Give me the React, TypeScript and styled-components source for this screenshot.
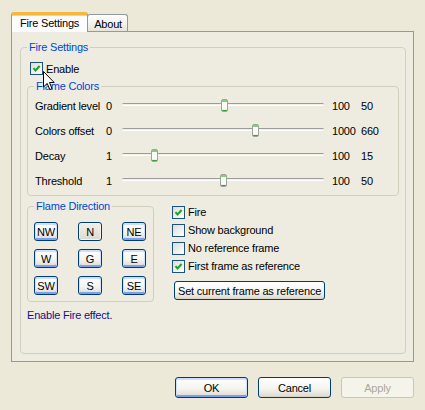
import React from "react";
import styled, { createGlobalStyle, css } from "styled-components";

const GlobalStyle = createGlobalStyle`
  html, body {
    margin: 0;
    padding: 0;
    background: #ece9d8;
  }
  body {
    font-family: "Liberation Sans", Arial, sans-serif;
    font-size: 11px;
    letter-spacing: -0.2px;
    color: #000;
  }
  * {
    box-sizing: border-box;
  }
`;

type SliderDef = { label: string; min: number; max: number; value: number };

const sliders: SliderDef[] = [
  { label: "Gradient level", min: 0, max: 100, value: 50 },
  { label: "Colors offset", min: 0, max: 1000, value: 660 },
  { label: "Decay", min: 1, max: 100, value: 15 },
  { label: "Threshold", min: 1, max: 100, value: 50 },
];

const directions = ["NW", "N", "NE", "W", "G", "E", "SW", "S", "SE"];

const options = [
  { label: "Fire", checked: true },
  { label: "Show background", checked: false },
  { label: "No reference frame", checked: false },
  { label: "First frame as reference", checked: true },
];

const TRACK_W = 202;
const THUMB_W = 7;

const CheckBox: React.FC<{ checked?: boolean }> = ({ checked }) => (
  <Box>
    {checked && (
      <svg width="11" height="11" viewBox="0 0 11 11">
        <path d="M2.5 5.2 L4.5 7.4 L8.6 3" fill="none" stroke="#21a121" strokeWidth="2" />
      </svg>
    )}
  </Box>
);

const Slider: React.FC<{ def: SliderDef }> = ({ def }) => {
  const pct = (def.value - def.min) / (def.max - def.min);
  return (
    <SliderRow>
      <span>{def.label}</span>
      <span>{def.min}</span>
      <Track>
        <Channel />
        <Thumb style={{ left: 1 + pct * (TRACK_W - THUMB_W) }} />
      </Track>
      <MaxValue>{def.max}</MaxValue>
      <span>{def.value}</span>
    </SliderRow>
  );
};

export default function App() {
  return (
    <Dialog>
      <GlobalStyle />
      <TabStrip>
        <Tab $active>Fire Settings</Tab>
        <Tab>About</Tab>
      </TabStrip>
      <Panel>
        <GroupBox $outer>
          <GroupLabel>Fire Settings</GroupLabel>
          <EnableRow>
            <CheckBox checked />
            <span>Enable</span>
          </EnableRow>
          <GroupBox $mt={5}>
            <GroupLabel>Flame Colors</GroupLabel>
            <SliderList>
              {sliders.map((s) => (
                <Slider key={s.label} def={s} />
              ))}
            </SliderList>
          </GroupBox>
          <LowerSection>
            <DirectionBox>
              <GroupLabel>Flame Direction</GroupLabel>
              <DirGrid>
                {directions.map((d) => (
                  <DirButton key={d} $plain={d === "N"}>
                    {d}
                  </DirButton>
                ))}
              </DirGrid>
            </DirectionBox>
            <OptionColumn>
              {options.map((o) => (
                <CheckRow key={o.label}>
                  <CheckBox checked={o.checked} />
                  <span>{o.label}</span>
                </CheckRow>
              ))}
              <RefButton>Set current frame as reference</RefButton>
            </OptionColumn>
          </LowerSection>
          <StatusText>Enable Fire effect.</StatusText>
        </GroupBox>
      </Panel>
      <Footer>
        <PushButton $default>OK</PushButton>
        <PushButton>Cancel</PushButton>
        <PushButton $disabled>Apply</PushButton>
      </Footer>
      <Cursor width="12" height="20" viewBox="0 0 12 20">
        <path d="M0.5 0.5 L0.5 16 L4.2 12.4 L6.8 18.6 L9 17.6 L6.5 11.5 L11.2 11.5 Z" fill="#fff" stroke="#000" strokeWidth="1" />
      </Cursor>
    </Dialog>
  );
}

//css-style
const Dialog = styled.div`
  position: relative;
  width: 425px;
  height: 410px;
  background: #ece9d8;
  padding: 12px 11px 0 11px;
  display: flex;
  flex-direction: column;
`;

const TabStrip = styled.div`
  display: flex;
  align-items: flex-end;
  height: 20px;
  margin-bottom: -1px;
  position: relative;
  z-index: 1;
`;

const Tab = styled.div<{ $active?: boolean }>`
  display: flex;
  align-items: center;
  border: 1px solid #919b9c;
  border-bottom: none;
  border-radius: 3px 3px 0 0;
  ${(p) =>
    p.$active
      ? css`
          height: 20px;
          padding: 0 8px 2px 8px;
          background: #fcfcfe;
          border-top: 3px solid #f4b83a;
          box-shadow: inset 0 1px 0 #ffd36a;
        `
      : css`
          height: 17px;
          margin-bottom: 1px;
          padding: 1px 5px 0 6px;
          margin-left: -1px;
          background: linear-gradient(#ffffff, #f1f0ea 60%, #e6e4d8);
        `}
`;

const Panel = styled.div`
  height: 331px;
  border: 1px solid #919b9c;
  background: #eeece1;
  padding: 9px 6px 0 8px;
`;

const GroupBox = styled.fieldset<{ $outer?: boolean; $mt?: number }>`
  margin: ${(p) => p.$mt ?? 0}px 0 0 0;
  min-width: 0;
  border: 1px solid #d0d0bf;
  border-radius: 4px;
  padding: 0 6px 2px 6px;
  ${(p) =>
    p.$outer &&
    css`
      width: 386px;
      height: 313px;
    `}
`;

const GroupLabel = styled.legend`
  color: #0046d5;
  padding: 0 2px;
  height: 13px;
  line-height: 13px;
`;

const EnableRow = styled.label`
  display: flex;
  align-items: center;
  gap: 3px;
  height: 13px;
  margin: 8px 0 0 3px;
`;

const Box = styled.span`
  display: inline-flex;
  align-items: center;
  justify-content: center;
  width: 13px;
  height: 13px;
  flex: none;
  border: 1px solid #1c5180;
  background: linear-gradient(135deg, #dcdcd7, #ffffff);
`;

const SliderList = styled.div`
  display: flex;
  flex-direction: column;
  padding-left: 1px;
`;

const SliderRow = styled.div`
  display: grid;
  grid-template-columns: 71px 16px ${TRACK_W}px 37px 1fr;
  align-items: center;
  height: 25px;
`;

const Track = styled.div`
  position: relative;
  height: 25px;
  display: flex;
  align-items: center;
`;

const Channel = styled.div`
  width: 100%;
  height: 3px;
  margin-top: -2px;
  border-radius: 2px;
  border-top: 1px solid #9d9c99;
  border-bottom: 1px solid #ffffff;
  background: #f0efe8;
`;

const Thumb = styled.div`
  position: absolute;
  top: 6px;
  width: ${THUMB_W}px;
  height: 13px;
  border: 1px solid #9aa69a;
  border-radius: 2px;
  background: linear-gradient(
    #7fcf7f 0 2px,
    #fbfbf8 2px 9px,
    #f0efe8 9px 10px,
    #3aa43a 10px
  );
`;

const MaxValue = styled.span`
  padding-left: 8px;
`;

const LowerSection = styled.div`
  display: flex;
  align-items: flex-start;
  margin-top: 4px;
`;

const DirectionBox = styled.fieldset`
  margin: 0;
  width: 127px;
  min-width: 0;
  border: 1px solid #d0d0bf;
  border-radius: 4px;
  padding: 9px 6px 6px 6px;
`;

const DirGrid = styled.div`
  display: grid;
  grid-template-columns: repeat(3, 24px);
  grid-auto-rows: 19px;
  column-gap: 20px;
  row-gap: 8px;
`;

const buttonFace = css`
  font: inherit;
  letter-spacing: inherit;
  color: #000;
  border: 1px solid #003c74;
  border-radius: 3px;
  background: linear-gradient(#ffffff, #f5f4ef 55%, #e3e0d6 90%, #d6d0c5);
  padding: 0;
  display: flex;
  align-items: center;
  justify-content: center;
`;

const DirButton = styled.button<{ $plain?: boolean }>`
  ${buttonFace}
  ${(p) =>
    p.$plain
      ? css`
          background: linear-gradient(#f0efe8, #e6e4da 60%, #dcd8cc);
          box-shadow: inset 0 0 0 1px #f4f3ee;
        `
      : css`
          box-shadow: inset 0 1px 0 1px #cee0fb, inset 0 -1px 0 1px #7d9fed;
        `}
`;

const OptionColumn = styled.div`
  display: flex;
  flex-direction: column;
  align-items: flex-start;
  margin-left: 18px;
  padding-top: 3px;
`;

const CheckRow = styled.label`
  display: flex;
  align-items: center;
  gap: 3px;
  height: 18px;
`;

const RefButton = styled.button`
  ${buttonFace}
  height: 19px;
  margin: 6px 0 0 2px;
  padding: 0 3px;
`;

const StatusText = styled.div`
  color: #10108c;
  line-height: 13px;
  margin: 7px 0 0 0;
`;

const Footer = styled.div`
  display: flex;
  justify-content: flex-end;
  gap: 10px;
  margin-top: 15px;
`;

const PushButton = styled.button<{ $default?: boolean; $disabled?: boolean }>`
  ${buttonFace}
  width: 73px;
  height: 21px;
  ${(p) =>
    p.$default &&
    css`
      box-shadow: inset 0 1px 0 1px #cee0fb, inset 0 -1px 0 1px #7d9fed;
    `}
  ${(p) =>
    p.$disabled &&
    css`
      border-color: #c9c7ba;
      background: #f5f4ea;
      color: #aca899;
    `}
`;

const Cursor = styled.svg`
  position: absolute;
  left: 43px;
  top: 71px;
  z-index: 2;
`;
